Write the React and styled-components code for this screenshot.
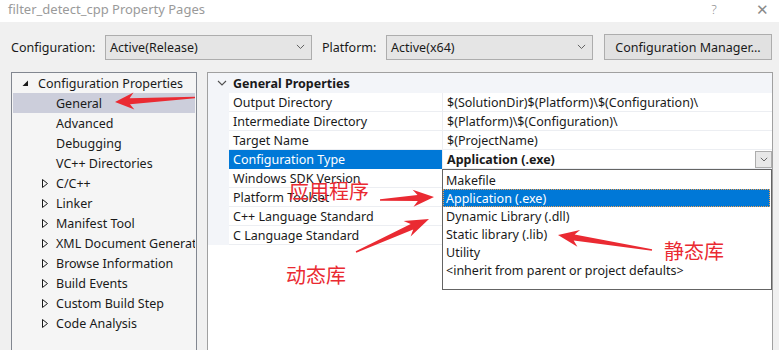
import React from "react";
import styled, { createGlobalStyle } from "styled-components";

const FONT = `"Noto Sans", "Noto Sans CJK SC", sans-serif`;

const Global = createGlobalStyle`
  html, body { margin: 0; padding: 0; background: #f0f0f0; }
  body { font-family: ${FONT}; font-size: 12.5px; color: #1a1a1a; }
  * { box-sizing: border-box; }
`;

const Window = styled.div`
  position: relative;
  width: 779px;
  height: 350px;
  overflow: hidden;
  background: #f0f0f0;
  display: flex;
  flex-direction: column;
`;

const TitleBar = styled.div`
  flex: none;
  height: 22px;
  background: #fff;
  display: flex;
  align-items: center;
  padding: 0 0 5px 8px;
  color: #9a9a9a;
  font-size: 13px;
`;
const Title = styled.div`flex: 1;`;
const TitleBtn = styled.div`
  width: ${(p) => p.$w}px;
  margin-right: ${(p) => p.$mr || 0}px;
  text-align: center;
  color: #8a8a8a;
  font-size: ${(p) => p.$fs}px;
  font-weight: 300;
`;

const Toolbar = styled.div`
  flex: none;
  height: 50px;
  display: flex;
  align-items: center;
  padding: 0 0 0 11px;
`;
const Label = styled.div`
  width: ${(p) => p.$w}px;
  flex: none;
`;
const Select = styled.div`
  width: ${(p) => p.$w}px;
  height: 25px;
  flex: none;
  border: 1px solid #adadad;
  background: #e5e5e5;
  display: flex;
  align-items: center;
  padding: 0 6px 0 4px;
  margin-right: ${(p) => p.$mr}px;
`;
const SelectText = styled.div`flex: 1;`;
const Button = styled.div`
  width: 168px;
  height: 26px;
  flex: none;
  border: 1px solid #adadad;
  background: #e1e1e1;
  display: flex;
  align-items: center;
  justify-content: center;
`;

const Content = styled.div`
  flex: 1;
  min-height: 0;
  display: flex;
  padding-left: 11px;
  gap: 10px;
`;

const TreePanel = styled.div`
  width: 186px;
  height: 300px;
  border: 1px solid #828790;
  background: #f5f5f5;
  flex: none;
`;
const TreeRow = styled.div`
  height: 20px;
  margin: 0 1px;
  display: flex;
  align-items: center;
  padding-left: ${(p) => p.$indent}px;
  background: ${(p) => (p.$sel ? "#cccedb" : "transparent")};
  white-space: nowrap;
  overflow: hidden;
`;
const Twisty = styled.span`
  width: ${(p) => p.$w}px;
  flex: none;
  display: flex;
  align-items: center;
`;

const PropPanel = styled.div`
  width: 566px;
  height: 300px;
  border: 1px solid #a0a0a0;
  background: #fff;
  flex: none;
  display: flex;
  flex-direction: column;
`;
const Header = styled.div`
  flex: none;
  height: 20px;
  background: #f3f5f9;
  display: flex;
  align-items: center;
  font-weight: 700;
`;
const Chevron = styled.div`
  width: 25px;
  display: flex;
  justify-content: center;
  padding-left: 2px;
`;
const PropRow = styled.div`
  flex: none;
  height: 19px;
  display: grid;
  grid-template-columns: 21px 213px 1fr;
`;
const Gutter = styled.div`background: #f3f5f9;`;
const NameCell = styled.div`
  display: flex;
  align-items: center;
  padding-left: 4px;
  border-bottom: 1px solid ${(p) => (p.$sel ? "#0078d7" : "#eceef2")};
  background: ${(p) => (p.$sel ? "#0078d7" : "#fff")};
  color: ${(p) => (p.$sel ? "#fff" : "#1a1a1a")};
  white-space: nowrap;
`;
const ValueCell = styled.div`
  display: flex;
  align-items: center;
  padding-left: 4px;
  border-left: 1px solid #eceef2;
  border-bottom: 1px solid #eceef2;
  font-weight: ${(p) => (p.$bold ? 700 : 400)};
  white-space: nowrap;
`;
const ValueText = styled.div`flex: 1;`;
const DropBtn = styled.div`
  width: 17px;
  height: 17px;
  border: 1px solid #adadad;
  background: #e8e8e8;
  display: flex;
  align-items: center;
  justify-content: center;
`;

const DropList = styled.div`
  position: absolute;
  left: 442px;
  top: 169px;
  width: 330px;
  height: 121px;
  background: #fff;
  border: 1px solid #646464;
  padding-top: 1px;
`;
const DropItem = styled.div`
  height: 18px;
  display: flex;
  align-items: center;
  padding-left: 3px;
  margin-right: 1px;
  background: ${(p) => (p.$sel ? "#0078d7" : "transparent")};
  color: ${(p) => (p.$sel ? "#fff" : "#1a1a1a")};
  outline: ${(p) => (p.$sel ? "1px dotted #f0a050" : "none")};
  outline-offset: -1px;
`;

const Overlay = styled.svg`
  position: absolute;
  left: 0;
  top: 0;
  pointer-events: none;
`;
const Note = styled.div`
  position: absolute;
  left: ${(p) => p.$x}px;
  top: ${(p) => p.$y}px;
  color: #ea2a32;
  font-family: "Noto Sans CJK SC", sans-serif;
  font-size: 20px;
  line-height: 1;
  white-space: nowrap;
`;

const ChevronDown = ({ size = 9, color = "#606060" }) => (
  <svg width={size} height={size * 0.6} viewBox="0 0 10 6">
    <path d="M1 1 L5 5 L9 1" fill="none" stroke={color} strokeWidth="1.1" />
  </svg>
);

const Expanded = () => (
  <svg width="7" height="7" viewBox="0 0 7 7">
    <polygon points="6,0.5 6,6 0.5,6" fill="#1a1a1a" />
  </svg>
);
const Collapsed = () => (
  <svg width="6" height="9" viewBox="0 0 6 9">
    <polygon points="0.5,0.5 5.5,4.5 0.5,8.5" fill="none" stroke="#1a1a1a" strokeWidth="1" />
  </svg>
);

function arrow(tail, tip, headLen, headW, tailW, neckW) {
  const [x1, y1] = tail;
  const [x2, y2] = tip;
  const dx = x2 - x1, dy = y2 - y1;
  const L = Math.hypot(dx, dy);
  const ux = dx / L, uy = dy / L;
  const nx = -uy, ny = ux;
  const bx = x2 - ux * headLen, by = y2 - uy * headLen;
  const nbx = x2 - ux * headLen * 0.78, nby = y2 - uy * headLen * 0.78;
  const pts = [
    [x1 + nx * tailW / 2, y1 + ny * tailW / 2],
    [nbx + nx * neckW / 2, nby + ny * neckW / 2],
    [bx + nx * headW / 2, by + ny * headW / 2],
    [x2, y2],
    [bx - nx * headW / 2, by - ny * headW / 2],
    [nbx - nx * neckW / 2, nby - ny * neckW / 2],
    [x1 - nx * tailW / 2, y1 - ny * tailW / 2],
  ];
  return pts.map((p) => p.map((v) => v.toFixed(1)).join(",")).join(" ");
}

const treeItems = [
  { t: "General", sel: true },
  { t: "Advanced" },
  { t: "Debugging" },
  { t: "VC++ Directories" },
  { t: "C/C++", c: true },
  { t: "Linker", c: true },
  { t: "Manifest Tool", c: true },
  { t: "XML Document Generator", c: true },
  { t: "Browse Information", c: true },
  { t: "Build Events", c: true },
  { t: "Custom Build Step", c: true },
  { t: "Code Analysis", c: true },
];

const props = [
  ["Output Directory", "$(SolutionDir)$(Platform)\\$(Configuration)\\"],
  ["Intermediate Directory", "$(Platform)\\$(Configuration)\\"],
  ["Target Name", "$(ProjectName)"],
  ["Configuration Type", "Application (.exe)", true],
  ["Windows SDK Version", ""],
  ["Platform Toolset", ""],
  ["C++ Language Standard", ""],
  ["C Language Standard", ""],
];

const options = [
  "Makefile",
  "Application (.exe)",
  "Dynamic Library (.dll)",
  "Static library (.lib)",
  "Utility",
  "<inherit from parent or project defaults>",
];

export default function App() {
  return (
    <>
      <Global />
      <Window>
        <TitleBar>
          <Title>filter_detect_cpp Property Pages</Title>
          <TitleBtn $w={20} $fs={13} $mr={21}>?</TitleBtn>
          <TitleBtn $w={34} $fs={15}>✕</TitleBtn>
        </TitleBar>
        <Toolbar>
          <Label $w={94}>Configuration:</Label>
          <Select $w={207} $mr={10}>
            <SelectText>Active(Release)</SelectText>
            <ChevronDown />
          </Select>
          <Label $w={64}>Platform:</Label>
          <Select $w={207} $mr={11}>
            <SelectText>Active(x64)</SelectText>
            <ChevronDown />
          </Select>
          <Button>Configuration Manager...</Button>
        </Toolbar>
        <Content>
          <TreePanel>
            <TreeRow $indent={9}>
              <Twisty $w={16}><Expanded /></Twisty>
              Configuration Properties
            </TreeRow>
            {treeItems.map((it) => (
              <TreeRow key={it.t} $indent={29} $sel={it.sel}>
                <Twisty $w={14}>{it.c && <Collapsed />}</Twisty>
                {it.t}
              </TreeRow>
            ))}
          </TreePanel>
          <PropPanel>
            <Header>
              <Chevron><ChevronDown size={10} color="#505050" /></Chevron>
              General Properties
            </Header>
            {props.map(([n, v, sel]) => (
              <PropRow key={n}>
                <Gutter />
                <NameCell $sel={sel}>{n}</NameCell>
                <ValueCell $bold={sel}>
                  <ValueText>{v}</ValueText>
                  {sel && (
                    <DropBtn><ChevronDown size={8} color="#555" /></DropBtn>
                  )}
                </ValueCell>
              </PropRow>
            ))}
          </PropPanel>
        </Content>
        <DropList>
          {options.map((o, i) => (
            <DropItem key={o} $sel={i === 1}>{o}</DropItem>
          ))}
        </DropList>
        <Overlay width="779" height="350" viewBox="0 0 779 350">
          <polygon fill="#ea2a32" points={arrow([195, 97.5], [115, 102], 19, 17, 1.5, 6)} />
          <polygon fill="#ea2a32" points={arrow([380, 200], [434, 197], 21, 17, 1.5, 6)} />
          <polygon fill="#ea2a32" points={arrow([356, 252], [429, 219], 24, 17, 1.5, 6)} />
          <polygon fill="#ea2a32" points={arrow([652, 250], [558, 235], 21, 17, 1.5, 6)} />
        </Overlay>
        <Note $x={289} $y={181}>应用程序</Note>
        <Note $x={286} $y={265}>动态库</Note>
        <Note $x={664} $y={241}>静态库</Note>
      </Window>
    </>
  );
}
